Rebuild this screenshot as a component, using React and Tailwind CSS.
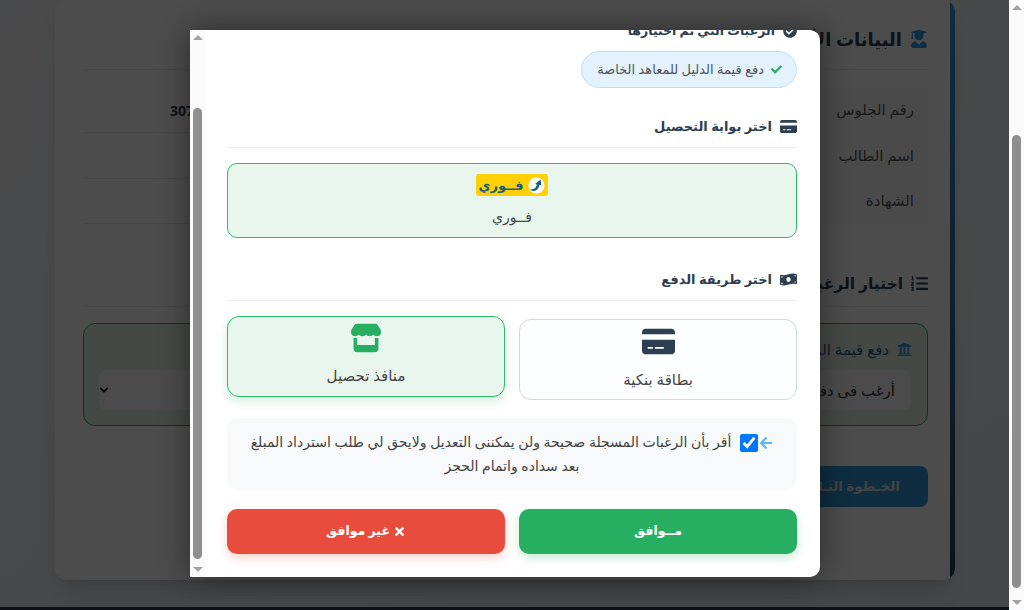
import { FaUserGraduate, FaListOl, FaUniversity, FaMoneyBillWave, FaCheck, FaArrowLeft, FaCheckCircle, FaChevronDown, FaTimes } from 'react-icons/fa';
import { FaCreditCard, FaStore } from 'react-icons/fa6';

const font = "font-['Noto_Sans','DejaVu_Sans',sans-serif]";

function ScrollBar({ thumbClass }) {
    return (
        <div className="w-[15px] shrink-0 flex flex-col items-center bg-[#fbfbfb]">
            <div className="h-[15px] flex items-center justify-center shrink-0">
                <div className="border-x-[5px] border-x-transparent border-b-[5px] border-b-[#a3a3a3]"></div>
            </div>
            <div className={"flex-1 w-full flex flex-col items-center " + thumbClass}>
                <div className="w-[9px] flex-1 rounded-full bg-[#8f8f8f]"></div>
            </div>
            <div className="h-[15px] flex items-center justify-center shrink-0">
                <div className="border-x-[5px] border-x-transparent border-t-[5px] border-t-[#a3a3a3]"></div>
            </div>
        </div>
    );
}

function SectionTitle({ icon, title }) {
    return (
        <div className="flex items-center gap-2 h-[31px] pb-[11px] border-b border-[#e9ecef] text-[#2c3e50]">
            <span className="text-[17px] w-[17px] flex justify-center">{icon}</span>
            <span className="text-[13px] font-bold text-[#2c3e50]">{title}</span>
        </div>
    );
}

function InfoRow({ label, height, children }) {
    return (
        <div className={"flex items-stretch " + height}>
            <div className="w-[200px] shrink-0 bg-[#f8f9fa] pr-[14px] pb-[2px] text-[#555] flex items-center">{label}</div>
            <div dir="ltr" className="flex-1 border-b border-[#e9ecef] flex items-center pl-[87px] font-bold text-[#2c3e50] text-[14px]">{children}</div>
        </div>
    );
}

function BackgroundPage() {
    return (
        <div dir="rtl" className="h-[580px] w-[900px] ml-[55px] shrink-0 bg-white rounded-xl overflow-hidden shadow-xl flex">
            <div className="w-[5px] shrink-0 bg-gradient-to-b from-[#3498db] to-[#2c3e50]"></div>
            <div className="flex-1 pr-[22px] pl-[28px]">
                <div className="pt-[27px] h-[70px] border-b border-[#e9ecef] flex items-start gap-2 text-[#2c3e50]">
                    <FaUserGraduate className="text-[#3498db] text-[18px] mt-[3px]" />
                    <span className="text-[18px] leading-[24px] font-bold">البيانات الأساسية</span>
                </div>
                <div className="mt-[18px] text-[15px]">
                    <InfoRow label="رقم الجلوس" height="h-[45px]">307</InfoRow>
                    <InfoRow label="اسم الطالب" height="h-[46px]"></InfoRow>
                    <InfoRow label="الشهادة" height="h-[45px]"></InfoRow>
                </div>
                <div className="mt-[49px] h-[34px] border-b border-[#e9ecef] flex items-start gap-2 text-[#2c3e50]">
                    <FaListOl className="text-[17px] mt-[2px]" />
                    <span className="text-[15.5px] leading-[20px] font-bold">اختيار الرغبات</span>
                </div>
                <div className="mt-[16px] h-[103px] rounded-[12px] border border-[#27ae60] bg-[#e8f5e9] pr-[15px] pl-[14px] pt-[15px]">
                    <div className="flex items-center gap-2 text-[#1a5f8a] text-[15px] h-[20px]">
                        <FaUniversity className="text-[#3498db]" />
                        <span>دفع قيمة الدليل</span>
                    </div>
                    <div className="mt-[10px] h-[42px] rounded-lg bg-[#fdfbfb] border border-[#eee] flex items-center justify-between pr-[16px] text-[15px] text-[#333]">
                        <span>أرغب فى دفع قيمة الدليل</span>
                        <FaChevronDown className="text-[10px] text-black" />
                    </div>
                </div>
                <div className="mt-[40px] w-[300px] h-[41px] rounded-lg bg-[#3498db] text-[#ddd] font-bold text-[13.5px] flex items-center pr-[28px]">الخـطوة التـالية</div>
            </div>
        </div>
    );
}

function PaymentModal() {
    return (
        <div className="absolute left-[190px] top-[30px] w-[630px] h-[547px] bg-white rounded-r-[10px] overflow-hidden flex shadow-[0_0_30px_rgba(0,0,0,0.45)]">
            <ScrollBar thumbClass="pt-[63px] pb-[3px]" />
            <div dir="rtl" className="flex-1 pr-[23px] pl-[22px] overflow-hidden text-[#2c3e50]">
                <div className="-mt-[9px] h-[20px] flex items-center gap-2 text-[12.5px] font-bold">
                    <FaCheckCircle className="text-[14px]" />
                    <span>الرغبات التي تم اختيارها</span>
                </div>
                <div className="mt-[10px] w-[216px] h-[37px] rounded-full bg-[#e3f2fd] border border-[#bbdefb] flex items-center gap-[7px] px-[14px] text-[13px] text-[#555] whitespace-nowrap">
                    <FaCheck className="text-[#27ae60] text-[11px] shrink-0" />
                    <span>دفع قيمة الدليل للمعاهد الخاصة</span>
                </div>
                <div className="mt-[29px]">
                    <SectionTitle icon={<FaCreditCard />} title="اختر بوابة التحصيل" />
                </div>
                <div className="mt-[15px] h-[75px] rounded-[10px] border border-[#2ebc6c] bg-[#e9f6ee] flex flex-col items-center pt-[10px]">
                    <div className="w-[72px] h-[22px] rounded-[3px] bg-[#ffd006] flex items-center justify-center gap-[5px] text-[#13617f]">
                        <svg viewBox="0 0 20 20" className="w-[17px] h-[17px] shrink-0">
                            <circle cx="10" cy="10" r="9.5" fill="#fff" />
                            <path d="M2.5 14.5 C7 15 9.5 12.5 10.5 9 L8.5 8 L15 3 L15.5 10 L13.5 9 C13 13 10 16.5 6 16.5 C4.5 16.5 3.5 15.8 2.5 14.5 Z" fill="#13617f" />
                        </svg>
                        <span className="text-[13px] font-bold leading-[22px] whitespace-nowrap">فــوري</span>
                    </div>
                    <div className="mt-[10px] text-[14px] text-[#444]">فــوري</div>
                </div>
                <div className="mt-[32px]">
                    <SectionTitle icon={<FaMoneyBillWave />} title="اختر طريقة الدفع" />
                </div>
                <div className="mt-[18px] grid grid-cols-2 gap-[14px] h-[81px]">
                    <div className="rounded-xl border border-[#cfd8e3] bg-[#fdfeff] flex flex-col items-center pt-[5px]">
                        <FaCreditCard className="text-[33px] text-[#2c3e50]" />
                        <div className="mt-[10px] text-[15px] text-[#444]">بطاقة بنكية</div>
                    </div>
                    <div className="-translate-y-[3px] rounded-xl border border-[#2ebc6c] bg-[#e9f6ee] shadow-[0_4px_12px_rgba(39,174,96,0.2)] flex flex-col items-center pt-[5px]">
                        <FaStore className="text-[32px] text-[#27ae60]" />
                        <div className="mt-[10px] text-[15px] text-[#444]">منافذ تحصيل</div>
                    </div>
                </div>
                <div className="mt-[18px] h-[72px] rounded-xl bg-[#f8f9fa] px-[20px] py-[12px] text-center text-[14px] leading-[24px] text-[#444]">
                    <FaArrowLeft className="inline text-[#64b5f6] text-[14px]" />
                    <input type="checkbox" defaultChecked readOnly className="w-[18px] h-[18px] mx-[1px] align-middle accent-[#0075ff]" />
                    <span className="mr-[8px]">أقر بأن الرغبات المسجلة صحيحة ولن يمكننى التعديل ولايحق لي طلب استرداد المبلغ بعد سداده واتمام الحجز</span>
                </div>
                <div className="mt-[19px] grid grid-cols-2 gap-[14px] h-[45px] text-white font-bold text-[12.5px]">
                    <button className="rounded-[10px] bg-[#27ae60] shadow-[0_4px_10px_rgba(39,174,96,0.25)]">مــوافق</button>
                    <button className="rounded-[10px] bg-[#e74c3c] shadow-[0_4px_10px_rgba(231,76,60,0.25)] flex items-center justify-center gap-[3px]">
                        <FaTimes className="text-[13px]" />
                        <span>غير موافق</span>
                    </button>
                </div>
            </div>
        </div>
    );
}

export default function App() {
    return (
        <div className={"relative w-[1024px] h-[610px] overflow-hidden flex " + font}>
            <div className="relative flex-1 h-full flex flex-col bg-gradient-to-br from-[#f5f7fa] to-[#e8eef4]">
                <BackgroundPage />
                <div className="flex-1"></div>
                <div className="h-[3px] bg-[#2c3e50]"></div>
                <div className="absolute inset-0 bg-black/70"></div>
            </div>
            <ScrollBar thumbClass="pt-[120px] pb-[7px]" />
            <PaymentModal />
        </div>
    );
}
